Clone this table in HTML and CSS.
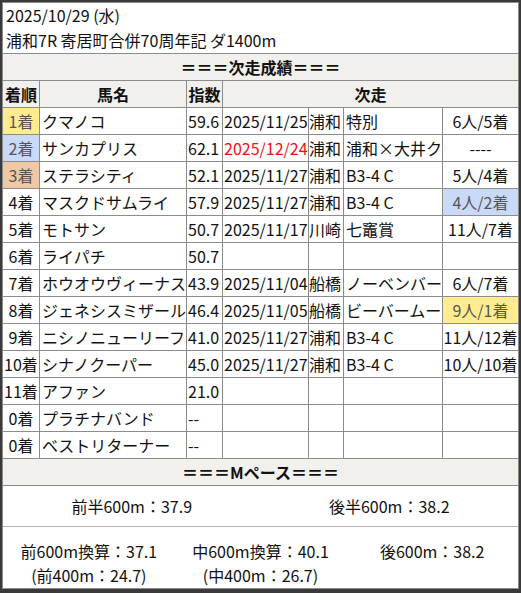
FILE: index.html
```html
<!DOCTYPE html>
<html lang="ja">
<head>
<meta charset="utf-8">
<link rel="stylesheet" href="styles.css">
</head>
<body>
<div class="sheet">
  <div class="head span">
    <div>2025/10/29 (水)</div>
    <div>浦和7R 寄居町合併70周年記 ダ1400m</div>
  </div>
  <div class="title span">＝＝＝次走成績＝＝＝</div>

  <div class="th">着順</div><div class="th">馬名</div><div class="th">指数</div><div class="th span4">次走</div>

  <div class="c rank y">1着</div><div class="c">クマノコ</div><div class="c n">59.6</div><div class="c d">2025/11/25</div><div class="c v">浦和</div><div class="c r">特別</div><div class="c res">6人/5着</div>
  <div class="c rank b">2着</div><div class="c">サンカプリス</div><div class="c n">62.1</div><div class="c d red">2025/12/24</div><div class="c v">浦和</div><div class="c r">浦和×大井ク</div><div class="c res">----</div>
  <div class="c rank t">3着</div><div class="c">ステラシティ</div><div class="c n">52.1</div><div class="c d">2025/11/27</div><div class="c v">浦和</div><div class="c r">B3-4 C</div><div class="c res">5人/4着</div>
  <div class="c rank">4着</div><div class="c">マスクドサムライ</div><div class="c n">57.9</div><div class="c d">2025/11/27</div><div class="c v">浦和</div><div class="c r">B3-4 C</div><div class="c res b">4人/2着</div>
  <div class="c rank">5着</div><div class="c">モトサン</div><div class="c n">50.7</div><div class="c d">2025/11/17</div><div class="c v">川崎</div><div class="c r">七竈賞</div><div class="c res">11人/7着</div>
  <div class="c rank">6着</div><div class="c">ライパチ</div><div class="c n">50.7</div><div class="c d"></div><div class="c v"></div><div class="c r"></div><div class="c res"></div>
  <div class="c rank">7着</div><div class="c">ホウオウヴィーナス</div><div class="c n">43.9</div><div class="c d">2025/11/04</div><div class="c v">船橋</div><div class="c r">ノーベンバー</div><div class="c res">6人/7着</div>
  <div class="c rank">8着</div><div class="c">ジェネシスミザール</div><div class="c n">46.4</div><div class="c d">2025/11/05</div><div class="c v">船橋</div><div class="c r">ビーバームー</div><div class="c res y">9人/1着</div>
  <div class="c rank">9着</div><div class="c">ニシノニューリーフ</div><div class="c n">41.0</div><div class="c d">2025/11/27</div><div class="c v">浦和</div><div class="c r">B3-4 C</div><div class="c res">11人/12着</div>
  <div class="c rank">10着</div><div class="c">シナノクーパー</div><div class="c n">45.0</div><div class="c d">2025/11/27</div><div class="c v">浦和</div><div class="c r">B3-4 C</div><div class="c res">10人/10着</div>
  <div class="c rank">11着</div><div class="c">アファン</div><div class="c n">21.0</div><div class="c d"></div><div class="c v"></div><div class="c r"></div><div class="c res"></div>
  <div class="c rank">0着</div><div class="c">プラチナバンド</div><div class="c n">--</div><div class="c d"></div><div class="c v"></div><div class="c r"></div><div class="c res"></div>
  <div class="c rank">0着</div><div class="c">ベストリターナー</div><div class="c n">--</div><div class="c d"></div><div class="c v"></div><div class="c r"></div><div class="c res"></div>

  <div class="title span">＝＝＝Mペース＝＝＝</div>
  <div class="pace span">
    <div class="half">前半600m：37.9</div>
    <div class="half">後半600m：38.2</div>
  </div>
  <div class="conv span">
    <div class="third"><div>前600m換算：37.1</div><div>(前400m：24.7)</div></div>
    <div class="third"><div>中600m換算：40.1</div><div>(中400m：26.7)</div></div>
    <div class="third"><div>後600m：38.2</div></div>
  </div>
</div>
</body>
</html>
```

FILE: styles.css
```css
html, body {
  margin: 0;
  padding: 0;
  background: #3a3a3a;
}
body {
  width: 521px;
  height: 593px;
  overflow: hidden;
}
.sheet {
  margin: 2px 0 0 2px;
  width: 515px;
  height: 585px;
  padding: 1px;
  background: #8c8c8c;
  display: grid;
  grid-template-columns: 36px 146px 35px 85px 34px 98px 75px;
  grid-template-rows: 50px 26px 26px repeat(13, 26px) 26px 40px 61px;
  gap: 1px;
  font-family: "Noto Sans CJK JP", "Noto Sans", sans-serif;
  font-size: 16px;
  color: #111;
}
.span { grid-column: 1 / -1; }
.span4 { grid-column: 4 / -1; }
.head {
  background: #fff;
  padding: 0 3px;
  line-height: 25px;
}
.title {
  background: #f1f0ec;
  font-weight: bold;
  text-align: center;
  line-height: 26px;
}
.th {
  background: #f1f0ec;
  font-weight: bold;
  text-align: center;
  line-height: 26px;
  white-space: nowrap;
}
.c {
  background: #fff;
  line-height: 26px;
  white-space: nowrap;
  padding: 0 0 0 2px;
}
.rank { text-align: center; padding: 0; }
.n { padding-left: 1px; }
.d { padding-left: 1px; }
.v { padding-left: 0; }
.r { padding-left: 2px; }
.res { text-align: center; padding: 0; }
.red { color: #ee1111; }
.y { background: #ffec8e; color: #555; }
.b { background: #c9daf8; color: #555; }
.t { background: #efc9a3; color: #555; }
.pace {
  background: #fff;
  display: grid;
  grid-template-columns: 1fr 1fr;
  align-items: center;
  border-bottom: 1px solid #b0b0b0;
  margin-bottom: -1px;
}
.half { text-align: center; }
.conv {
  background: #fff;
  display: grid;
  grid-template-columns: 1fr 1fr 1fr;
  padding-top: 12px;
  line-height: 24px;
}
.third { text-align: center; }
```
